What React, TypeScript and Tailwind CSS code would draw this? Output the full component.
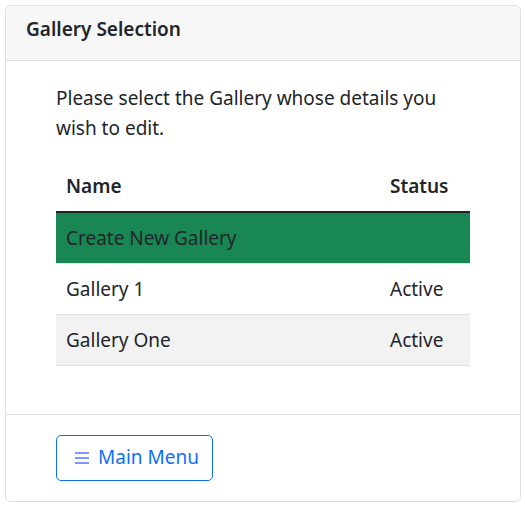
import React from 'react';

interface GalleryRow {
  name: string;
  status: string;
}

const galleries: GalleryRow[] = [
  { name: 'Gallery 1', status: 'Active' },
  { name: 'Gallery One', status: 'Active' },
];

export default function App() {
  return (
    <div className="p-[5px] bg-white text-[#212529]" style={{ fontFamily: '"Noto Sans", "Open Sans", sans-serif' }}>
      <div className="w-[516px] border border-[#dfdfdf] rounded-[5px] overflow-hidden">
        {/* header */}
        <div className="bg-[#f7f7f7] border-b border-[#dfdfdf] px-[20px] pt-[8px] pb-[16px] h-[55px]">
          <h2 className="text-[19px] leading-[30px] font-semibold">Gallery Selection</h2>
        </div>

        {/* body */}
        <div className="px-[50px] pt-[22px] pb-[48px]">
          <p className="text-[19px] leading-[30px] w-[400px]">
            Please select the Gallery whose details you wish to edit.
          </p>

          <table className="w-full mt-[18px] text-[19px] border-collapse">
            <thead>
              <tr className="border-b-2 border-[#212529]">
                <th className="text-left font-semibold h-[51px] pl-[10px] leading-[30px]">Name</th>
                <th className="text-left font-semibold h-[51px] pl-[10px] w-[90px] leading-[30px]">Status</th>
              </tr>
            </thead>
            <tbody>
              <tr className="bg-[#198754] border-b border-[#dee2e6]">
                <td className="h-[51px] pl-[10px] leading-[30px]" colSpan={2}>Create New Gallery</td>
              </tr>
              {galleries.map((g, i) => (
                <tr key={g.name} className={i % 2 === 1 ? 'bg-[#f2f2f2] border-b border-[#dee2e6]' : 'border-b border-[#dee2e6]'}>
                  <td className="h-[51px] pl-[10px] leading-[30px]">{g.name}</td>
                  <td className="h-[51px] pl-[10px] leading-[30px]">{g.status}</td>
                </tr>
              ))}
            </tbody>
          </table>
        </div>

        {/* footer */}
        <div className="border-t border-[#dfdfdf] px-[50px] py-[20px]">
          <button className="flex items-center gap-[9px] h-[46px] w-[157px] pl-[18px] border border-[#0d6efd] rounded-[5px] text-[#0d6efd] text-[19px]">
            <svg width="14" height="14" viewBox="0 0 14 14" className="shrink-0">
              <rect x="0" y="1" width="14" height="2" fill="#7f97ff" />
              <rect x="0" y="6" width="14" height="2" fill="#7f97ff" />
              <rect x="0" y="11" width="14" height="2" fill="#7f97ff" />
            </svg>
            <span>Main Menu</span>
          </button>
        </div>
      </div>
    </div>
  );
}
